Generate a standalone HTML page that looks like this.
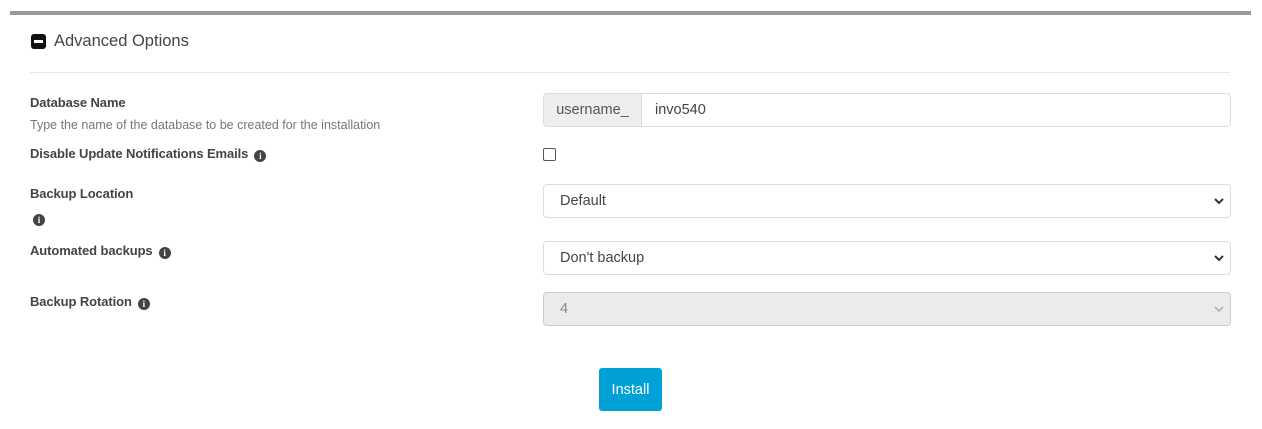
<!DOCTYPE html>
<html><head><meta charset="utf-8"><style>
*{box-sizing:border-box;margin:0;padding:0}
body{width:1262px;height:429px;background:#fff;font-family:"Liberation Sans",sans-serif;color:#333;position:relative;overflow:hidden}
.a{position:absolute}
.lbl{font-size:13px;font-weight:bold;color:#444;letter-spacing:-0.1px}
.help{font-size:12.5px;color:#777}
.ic{display:inline-block;width:12px;height:12px;border-radius:50%;background:#444;color:#fff;font-size:9px;font-weight:bold;text-align:center;line-height:12px;font-family:"Liberation Serif",serif;vertical-align:-1px;margin-left:6px}
.box{border:1px solid #ddd;border-radius:4px;background:#fff;font-size:14.5px;color:#444;padding-left:16px}
.sel{display:flex;align-items:center;justify-content:space-between;padding-right:6px}
</style></head><body>
<div class="a" style="left:10px;top:11px;width:1241px;height:4px;background:#999"></div>
<div class="a" style="left:31px;top:34px;width:15px;height:15px;background:#111;border-radius:3px"><div style="position:absolute;left:3px;top:6px;width:9px;height:3px;background:#fff"></div></div>
<div class="a" style="left:54px;top:32px;font-size:16.5px;color:#444">Advanced Options</div>
<div class="a" style="left:30px;top:72px;width:1200px;height:1px;background:#e8e8e8"></div>

<div class="a lbl" style="left:30px;top:95px">Database Name</div>
<div class="a help" style="left:30px;top:118px">Type the name of the database to be created for the installation</div>
<div class="a lbl" style="left:30px;top:146px">Disable Update Notifications Emails<span class="ic">i</span></div>
<div class="a lbl" style="left:30px;top:186px">Backup Location</div>
<div class="a" style="left:33px;top:209px"><span class="ic" style="margin:0">i</span></div>
<div class="a lbl" style="left:30px;top:243px">Automated backups<span class="ic">i</span></div>
<div class="a lbl" style="left:30px;top:294px">Backup Rotation<span class="ic">i</span></div>

<div class="a box" style="left:543px;top:93px;width:688px;height:34px;display:flex;padding:0;overflow:hidden">
 <div style="width:98px;background:#eee;border-right:1px solid #ddd;color:#555;display:flex;align-items:center;justify-content:center">username_</div>
 <div style="padding-left:13px;display:flex;align-items:center">invo540</div>
</div>
<div class="a" style="left:543px;top:148px;width:13px;height:13px;border:1px solid #555;border-radius:2px"></div>

<div class="a box sel" style="left:543px;top:184px;width:688px;height:34px"><span>Default</span><svg width="10" height="8" viewBox="0 0 10 8"><path d="M1 2l4 4 4-4" stroke="#333" stroke-width="2" fill="none"/></svg></div>
<div class="a box sel" style="left:543px;top:241px;width:688px;height:34px"><span>Don't backup</span><svg width="10" height="8" viewBox="0 0 10 8"><path d="M1 2l4 4 4-4" stroke="#333" stroke-width="2" fill="none"/></svg></div>
<div class="a box sel" style="left:543px;top:292px;width:688px;height:34px;background:#ebebeb;color:#888;border-color:#ccc"><span>4</span><svg width="10" height="8" viewBox="0 0 10 8"><path d="M1 2l4 4 4-4" stroke="#aaa" stroke-width="1.5" fill="none"/></svg></div>

<div class="a" style="left:599px;top:368px;width:63px;height:43px;background:#00a1d6;border-radius:3px;color:#fff;font-size:14.5px;display:flex;align-items:center;justify-content:center">Install</div>
</body></html>
